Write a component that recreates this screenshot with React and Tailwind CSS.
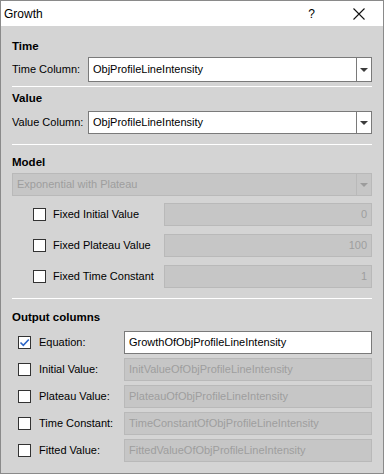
import React from 'react';

// Qt-style "Growth" dialog: sections separated by white rules, disabled model fields.
const FONT = { fontFamily: '"Liberation Sans", Arial, sans-serif' };

const Arrow = ({ disabled }) => (
  <svg width="8" height="4" viewBox="0 0 8 4">
    <path d="M0 0h8L4 4z" fill={disabled ? '#9c9c9c' : '#3c3c3c'} />
  </svg>
);

const Combo = ({ value, disabled, className = '' }) => (
  <div
    className={`flex items-stretch border ${
      disabled ? 'border-[#b9b9b9] bg-[#c6c6c6] text-[#9e9e9e]' : 'border-[#7a7a7a] bg-white text-black'
    } ${className}`}
  >
    <div className="flex-1 flex items-center pl-[4px] truncate">{value}</div>
    <div className={`w-[15px] flex items-center justify-center border-l ${disabled ? 'border-[#b9b9b9]' : 'border-[#7a7a7a]'}`}>
      <Arrow disabled={disabled} />
    </div>
  </div>
);

const Check = ({ checked }) => (
  <div className="w-[13px] h-[13px] border border-[#333] bg-white flex items-center justify-center shrink-0">
    {checked && (
      <svg width="11" height="11" viewBox="0 0 11 11">
        <path d="M1.5 5.5l2.8 2.8L9.8 2.5" stroke="#2b64c6" strokeWidth="1.6" fill="none" />
      </svg>
    )}
  </div>
);

const Field = ({ value, disabled, align = 'left', className = '' }) => (
  <div
    className={`h-[23px] flex items-center px-[4px] border ${
      disabled ? 'border-[#b9b9b9] bg-[#c6c6c6] text-[#9e9e9e]' : 'border-[#7a7a7a] bg-white text-black'
    } ${align === 'right' ? 'justify-end' : ''} ${className}`}
  >
    {value}
  </div>
);

const Rule = ({ className = '' }) => <div className={`h-px bg-white ${className}`} />;

const fixedRows = [
  { label: 'Fixed Initial Value', value: '0' },
  { label: 'Fixed Plateau Value', value: '100' },
  { label: 'Fixed Time Constant', value: '1' },
];

const outputRows = [
  { label: 'Equation:', value: 'GrowthOfObjProfileLineIntensity', checked: true },
  { label: 'Initial Value:', value: 'InitValueOfObjProfileLineIntensity' },
  { label: 'Plateau Value:', value: 'PlateauOfObjProfileLineIntensity' },
  { label: 'Time Constant:', value: 'TimeConstantOfObjProfileLineIntensity' },
  { label: 'Fitted Value:', value: 'FittedValueOfObjProfileLineIntensity' },
];

export default function App() {
  return (
    <div
      className="w-[384px] h-[474px] border border-[#8a8a8a] bg-[#d4d4d4] flex flex-col text-[11px] text-black overflow-hidden"
      style={FONT}
    >
      {/* Title bar */}
      <div className="h-[25px] bg-white flex items-center pl-[3px] shrink-0">
        <span className="text-[12px]">Growth</span>
        <span className="ml-auto text-[12px] mr-[38px]">?</span>
        <svg width="12" height="12" viewBox="0 0 12 12" className="mr-[18px]">
          <path d="M0.5 0.5l11 11M11.5 0.5l-11 11" stroke="#111" strokeWidth="1.1" />
        </svg>
      </div>

      <div className="flex flex-col px-[11px] pt-[12px]">
        {/* Time */}
        <div className="font-bold text-[11.5px] h-[16px] leading-[16px]">Time</div>
        <div className="flex items-center mt-[3px]">
          <span className="w-[76px]">Time Column:</span>
          <Combo value="ObjProfileLineIntensity" className="flex-1 h-[25px]" />
        </div>
        <Rule className="mt-[4px]" />

        {/* Value */}
        <div className="font-bold text-[11.5px] h-[16px] leading-[16px] mt-[3px]">Value</div>
        <div className="flex items-center mt-[5px]">
          <span className="w-[76px]">Value Column:</span>
          <Combo value="ObjProfileLineIntensity" className="flex-1 h-[23px]" />
        </div>
        <Rule className="mt-[10px]" />

        {/* Model */}
        <div className="font-bold text-[11.5px] h-[16px] leading-[16px] mt-[9px]">Model</div>
        <Combo value="Exponential with Plateau" disabled className="h-[23px] mt-[3px]" />
        <div className="flex flex-col gap-[8px] mt-[7px]">
          {fixedRows.map((r) => (
            <div key={r.label} className="flex items-center">
              <div className="w-[21px]" />
              <Check />
              <span className="ml-[7px] w-[111px]">{r.label}</span>
              <Field value={r.value} disabled align="right" className="flex-1" />
            </div>
          ))}
        </div>
        <Rule className="mt-[10px]" />

        {/* Output columns */}
        <div className="font-bold text-[11.5px] h-[16px] leading-[16px] mt-[10px]">Output columns</div>
        <div className="flex flex-col gap-[4px] mt-[6px]">
          {outputRows.map((r) => (
            <div key={r.label} className="flex items-center">
              <div className="w-[6px]" />
              <Check checked={r.checked} />
              <span className="ml-[8px] w-[85px]">{r.label}</span>
              <Field value={r.value} disabled={!r.checked} className="flex-1" />
            </div>
          ))}
        </div>
      </div>
    </div>
  );
}
